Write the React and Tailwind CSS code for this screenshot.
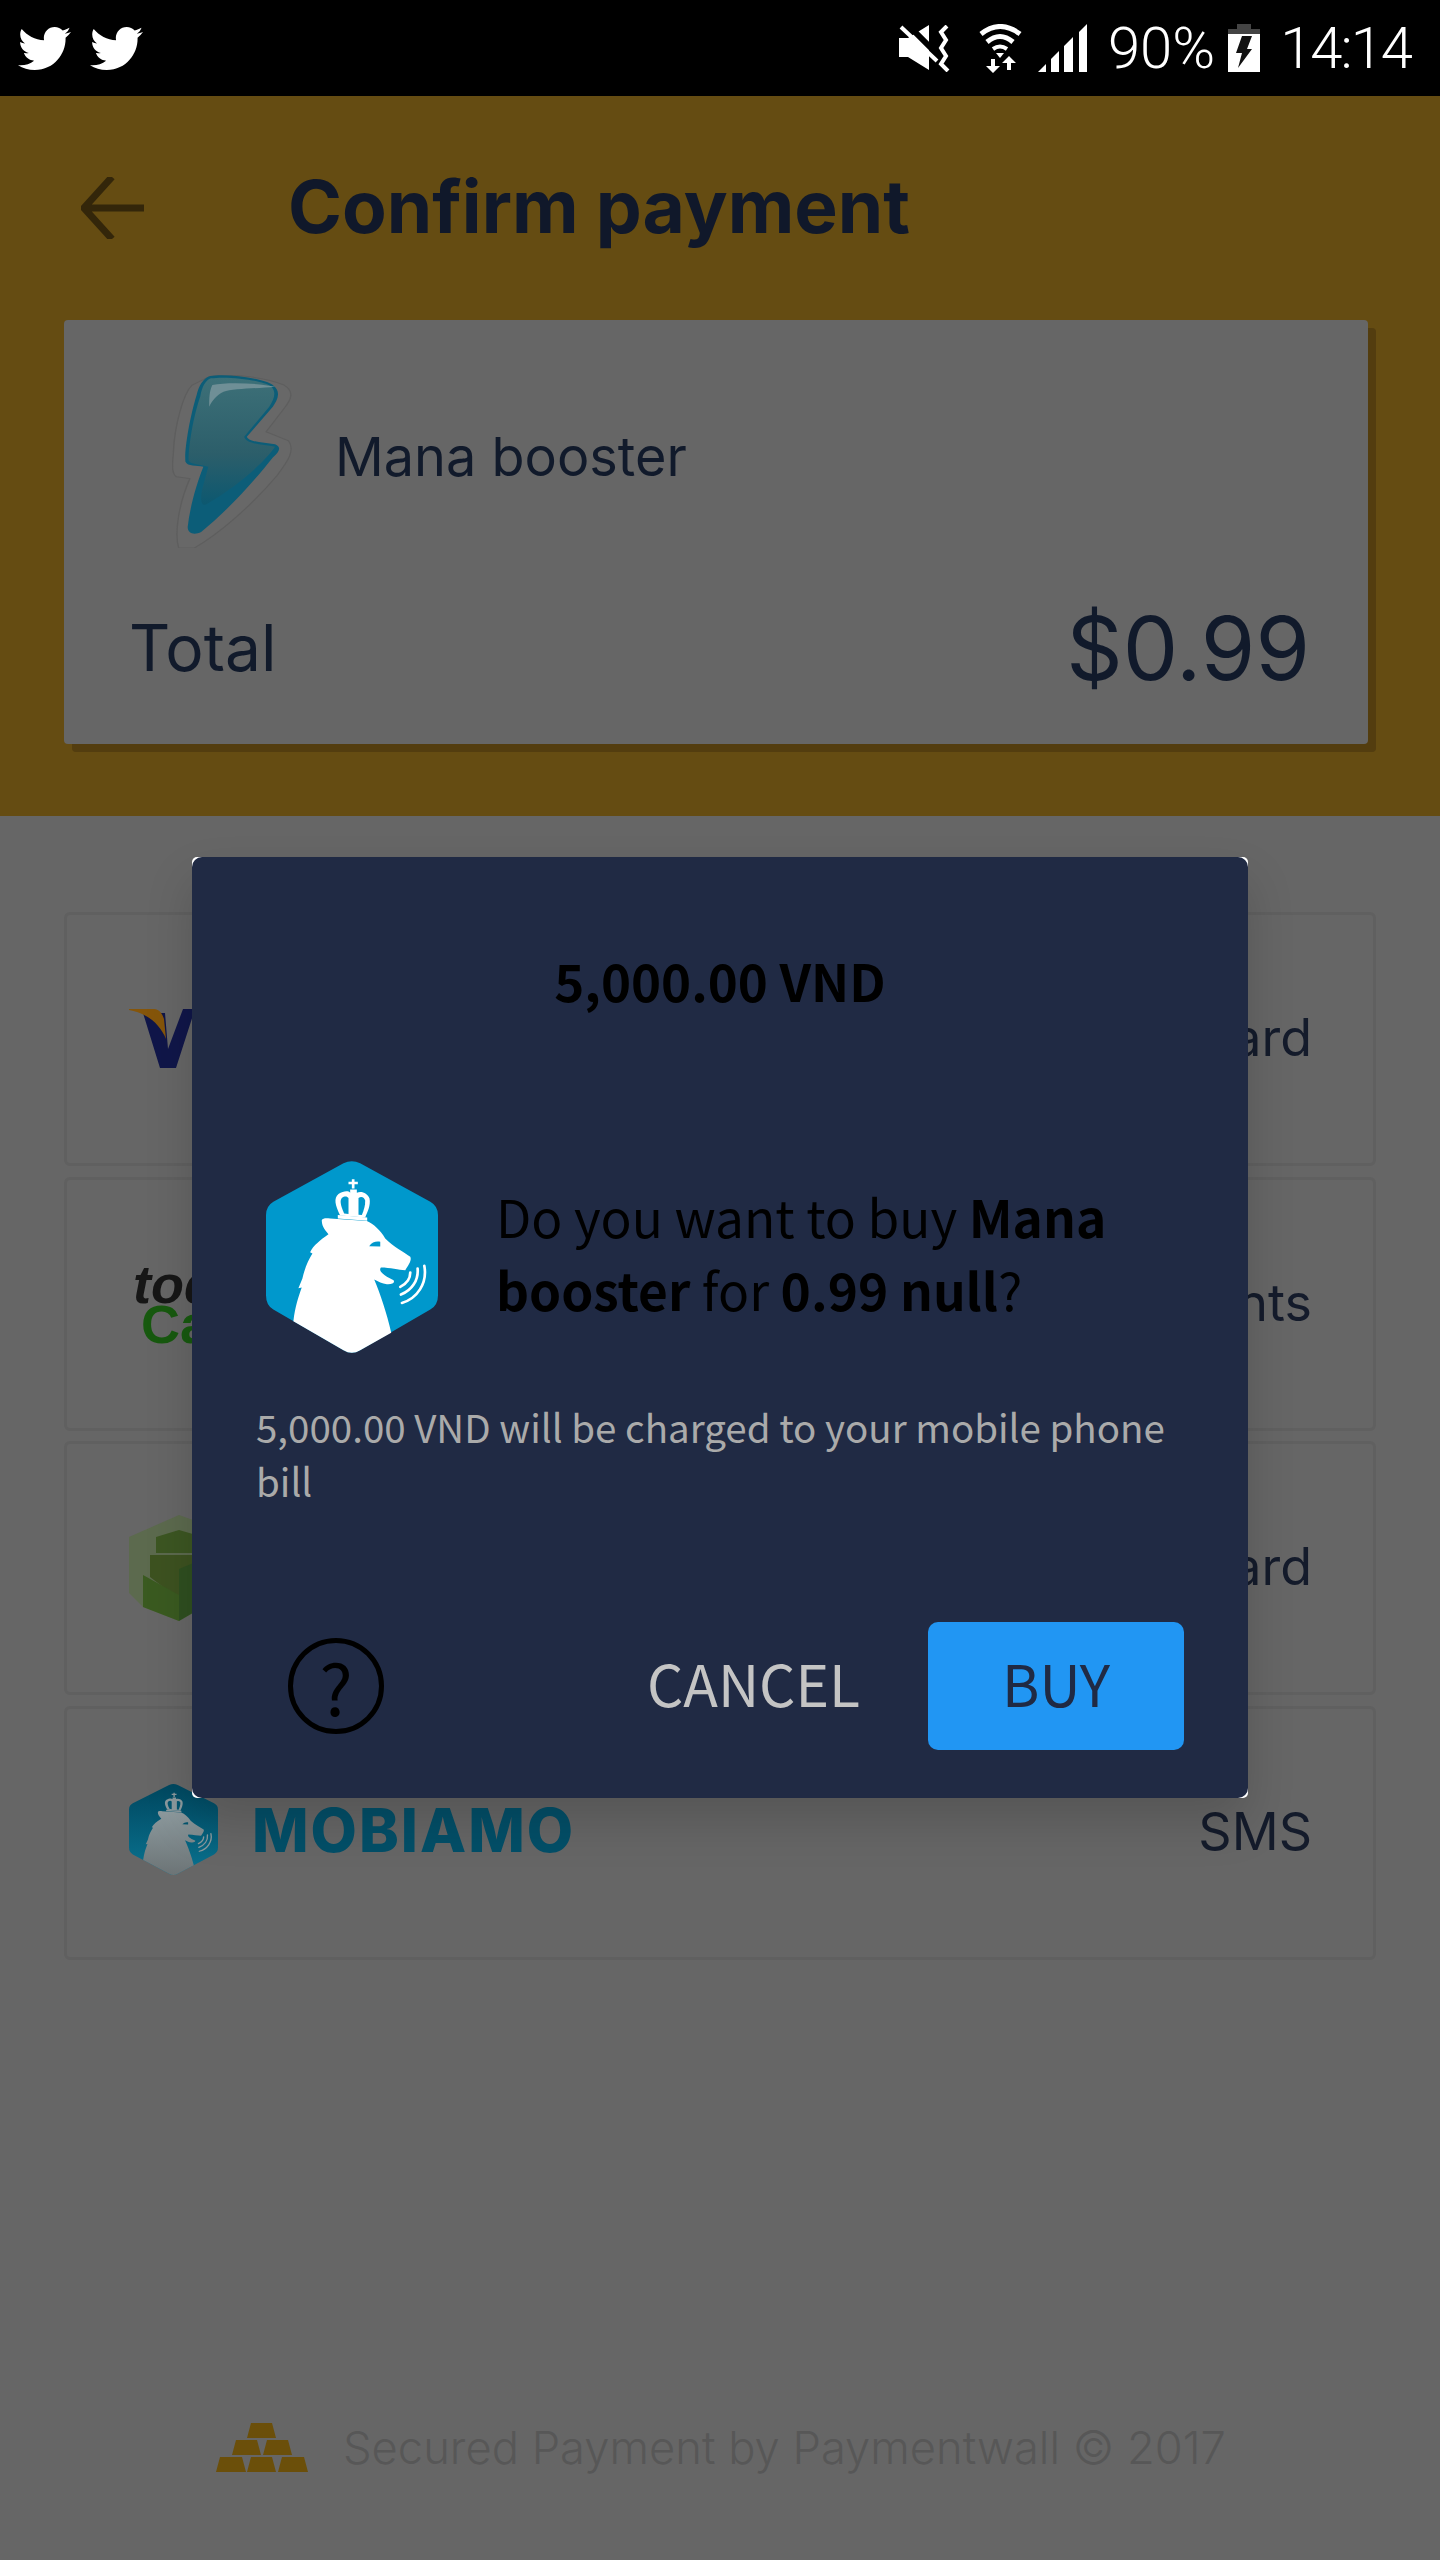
import React from "react";
import { FaTwitter } from "react-icons/fa";

function Bear({ hexFill = "#0098cc", bearFill = "#ffffff", eyeFill = "#0098cc", className = "", muted = false }) {
  const hex = muted ? "url(#hexFade)" : hexFill;
  const bear = muted ? "url(#bearFade)" : bearFill;
  return (
    <svg viewBox="108 93 515 575" className={className} preserveAspectRatio="none">
      {muted && (
        <defs>
          <linearGradient id="hexFade" x1="0" y1="0" x2="0" y2="1">
            <stop offset="0" stopColor="#00475f" />
            <stop offset="1" stopColor="#0a7391" />
          </linearGradient>
          <linearGradient id="bearFade" x1="0" y1="0" x2="0" y2="1">
            <stop offset="0" stopColor="#8d9a9e" />
            <stop offset="1" stopColor="#6c7476" />
          </linearGradient>
        </defs>
      )}
      <path fill={hex} d="M340 100 Q365 87 390 100 L600 215 Q623 228 623 255 L623 495 Q623 525 600 538 L390 660 Q365 675 340 660 L130 538 Q108 525 108 495 L108 255 Q108 228 130 215 Z" />
      <path fill={bear} d="M190 573 C195 530 205 500 215 472 L205 474 L217 445 C225 410 235 390 247 370 L240 366 C250 345 270 330 295 312 C280 295 275 285 275 270 C278 263 290 264 300 265 L410 273 C430 282 450 300 465 325 C490 350 520 365 540 380 C545 390 535 405 525 420 C505 420 480 412 452 412 C445 420 455 430 470 440 L490 450 C495 458 485 463 470 462 C455 460 445 455 432 448 C450 490 470 550 483 607 L390 660 Q365 675 340 660 Z" />
      <path fill={eyeFill} d="M417 348 C425 335 440 332 450 335 L450 349 Z" />
      <path fill={bearFill} d="M330 256 C315 225 310 205 325 192 C340 182 355 182 360 188 L360 178 L380 178 L380 188 C395 182 412 190 418 205 C422 225 412 245 405 262 Z" />
      <path fill={bearFill} d="M323 255 L411 262 L411 272 L323 265 Z" />
      <path fill={eyeFill} d="M342 250 C332 228 328 212 335 204 C344 197 351 199 355 204 L355 252 Z" />
      <path fill={eyeFill} d="M385 254 L385 204 C394 197 403 203 405 212 C406 225 400 242 395 255 Z" />
      <path fill={bearFill} d="M365 148 H373 V155 H383 V163 H373 V175 H365 V163 H355 V155 H365 Z" />
      <g fill="none" stroke={bearFill} strokeWidth="8" strokeLinecap="round">
        <path d="M510 470 C530 460 540 445 540 427" />
        <path d="M512 493 C545 480 565 450 562 415" />
        <path d="M515 518 C560 505 592 460 582 407" />
      </g>
    </svg>
  );
}

function MuteIcon() {
  return (
    <svg width="51" height="47" viewBox="0 0 51 47" className="block">
      <path fill="#fff" d="M0 13 H9 L30 0 V45 L9 32 H0 Z" />
      <path stroke="#000" strokeWidth="6" d="M6 -3 L44 35" />
      <path stroke="#fff" strokeWidth="4" d="M2 2 L38 36" />
      <path fill="none" stroke="#fff" strokeWidth="4" d="M48 1 L42 7 L47 15 L42 23 L47 31 L42 39 L49 46" />
    </svg>
  );
}

function WifiIcon() {
  return (
    <svg width="43" height="49" viewBox="0 0 43 49" className="block">
      <g fill="none" stroke="#fff" strokeWidth="5">
        <path d="M2 10 Q21 -5 41 10" />
        <path d="M8 18 Q21 7 34 18" />
      </g>
      <path fill="none" stroke="#fff" strokeWidth="4" d="M14 25 Q21 20 28 25" />
      <path fill="#fff" d="M17 29 H25 L21 34 Z" />
      <path fill="#fff" d="M12 35 H16 V42 H21 L14 49 L7 42 H12 Z" />
      <path fill="#fff" d="M30 32 L37 39 H32 V46 H28 V39 H23 Z" />
    </svg>
  );
}

function SignalIcon() {
  return (
    <svg width="49" height="48" viewBox="0 0 49 48" className="block">
      <path fill="#fff" d="M0 48 L8 40 V48 Z M13 48 V35 L21 27 V48 Z M26 48 V22 L35 13 V48 Z M41 48 V8 L49 0 V48 Z" />
    </svg>
  );
}

function BatteryIcon() {
  return (
    <svg width="32" height="48" viewBox="0 0 32 48" className="block">
      <rect x="9" y="0" width="14" height="6" fill="#444" />
      <rect x="0" y="5" width="32" height="5" fill="#444" />
      <rect x="0" y="10" width="32" height="38" fill="#fff" />
      <path fill="#111" d="M14 12 H24 L19 25 H24 L10 44 L14 29 H8 Z" />
    </svg>
  );
}

function Bolt() {
  return (
    <svg viewBox="295 165 270 518" width="121" height="173" preserveAspectRatio="none" className="block">
      <defs>
        <linearGradient id="boltFill" x1="0" y1="0" x2="0" y2="1">
          <stop offset="0" stopColor="#3d7078" />
          <stop offset="0.6" stopColor="#2c5e6a" />
          <stop offset="1" stopColor="#0c5870" />
        </linearGradient>
      </defs>
      <path fill="#686868" stroke="#5e5e5e" strokeWidth="3" d="M375 172 C420 155 510 175 545 195 C570 215 560 240 545 265 L505 335 L555 362 C570 390 555 420 530 465 C470 560 400 640 345 683 L310 683 C300 640 310 550 335 475 L305 470 C295 460 295 440 298 400 C300 320 320 220 340 195 Z" />
      <path fill="#0c5d78" d="M380 168 C420 160 500 175 520 195 C540 215 530 240 520 260 L462 350 C465 365 500 368 525 372 C540 380 535 395 520 412 C480 480 420 570 360 635 C345 645 330 640 330 620 C335 560 350 490 365 440 C350 435 330 440 325 425 C322 390 335 290 350 225 C355 195 365 175 380 168 Z" />
      <path fill="url(#boltFill)" d="M382 175 C420 168 495 180 515 198 C530 215 522 240 512 260 L456 350 C460 372 495 372 525 380 C505 420 450 490 372 552 C360 560 358 540 362 510 C366 490 372 460 376 440 C350 430 335 432 332 420 C332 380 342 290 358 230 C362 200 370 180 382 175 Z" />
      <path fill="#6f8f96" d="M385 195 C420 185 490 190 525 200 C490 205 430 205 410 215 C395 225 385 240 378 260 C378 235 378 215 385 195 Z" />
    </svg>
  );
}

function VisaMark() {
  return (
    <svg width="90" height="60" viewBox="0 0 90 60" className="block">
      <path fill="#101649" d="M14 4 H36 L39 40 L54 0 H66 L47 59 H31 Z" />
      <path fill="#85550a" d="M0 0 H25 C30 0 33 4 35 10 L37 30 C33 20 26 12 17 7 C12 4 6 2 0 1 Z" />
    </svg>
  );
}

function BoxMark() {
  return (
    <svg width="120" height="106" viewBox="0 0 120 106" className="block">
      <path fill="#5c6a4e" d="M50 0 L100 18 V78 L50 106 L14 92 L0 78 V22 Z" />
      <path fill="#3c5622" d="M27 22 L50 15 L74 22 V38 L27 38 Z" />
      <path fill="#3d5220" d="M21 40 L64 40 V80 L50 84 L21 62 Z" />
      <path fill="#3a5a20" d="M14 60 L50 80 V106 L14 92 Z" />
      <path fill="#2f4f20" d="M50 54 L74 44 V92 L50 106 Z" />
    </svg>
  );
}

function MethodRow({ children, label }) {
  return (
    <div className="flex h-[254px] items-center justify-between rounded-[6px] border-[3px] border-[#606060] pl-[62px] pr-[61px]">
      <div className="flex items-center">{children}</div>
      <span className="-mt-[2px] text-[52px] font-normal leading-none text-[#141b2b]">{label}</span>
    </div>
  );
}

export default function App() {
  return (
    <div className="relative h-[2560px] w-[1440px] overflow-hidden bg-[#666666] font-['Inter',sans-serif]">
      <div className="flex h-[96px] items-center justify-between bg-black pl-[18px] pr-[29px]">
        <div className="flex items-center gap-[19px] text-white">
          <FaTwitter size={53} />
          <FaTwitter size={53} />
        </div>
        <div className="flex items-center text-white">
          <MuteIcon />
          <div className="w-[29px]" />
          <WifiIcon />
          <div className="w-[16px]" />
          <SignalIcon />
          <span className="ml-[21px] font-['Roboto',sans-serif] text-[58px] font-light leading-none">90%</span>
          <div className="ml-[13px]"><BatteryIcon /></div>
          <span className="ml-[20px] font-['Roboto',sans-serif] text-[58px] font-light leading-none tracking-[-2px]">14:14</span>
        </div>
      </div>

      <header className="h-[720px] bg-[#654c12] px-[64px] pr-[72px]">
        <div className="flex h-[224px] items-center pl-[17px]">
          <svg width="63" height="62" viewBox="0 0 63 62" className="block">
            <path fill="none" stroke="#33260a" strokeWidth="7" d="M63 31 H3 M31 0 L3 31 L31 62" />
          </svg>
          <h1 className="-mt-[3px] ml-[144px] text-[73px] font-bold leading-none text-[#10182a]">Confirm payment</h1>
        </div>
        <section className="h-[424px] rounded-[4px] bg-[#666666] shadow-[8px_8px_0_#533d0f]">
          <div className="flex h-[228px] items-start pl-[108px] pt-[55px]">
            <Bolt />
            <span className="ml-[42px] mt-[55px] text-[54px] leading-none text-[#111a2b]">Mana booster</span>
          </div>
          <div className="flex items-center justify-between pl-[65px] pr-[58px] pt-[56px]">
            <span className="text-[64px] leading-none text-[#111a2b]">Total</span>
            <span className="text-[88px] leading-none text-[#111a2b]">$0.99</span>
          </div>
        </section>
      </header>

      <main className="flex flex-col gap-[10.5px] px-[64px] pt-[96px]">
        <MethodRow label="Credit Card">
          <VisaMark />
        </MethodRow>
        <MethodRow label="Local Payments">
          <div className="pl-[4px] font-['Liberation_Sans',sans-serif] font-bold italic leading-[40px]">
            <div className="text-[54px] text-[#161616]">todito</div>
            <div className="pl-[8px] text-[54px] not-italic text-[#17590f]">Cash</div>
          </div>
        </MethodRow>
        <MethodRow label="Prepaid Card">
          <BoxMark />
        </MethodRow>
        <MethodRow label="SMS">
          <div className="-mt-[6px] flex items-center">
            <Bear muted hexFill="#0a6280" bearFill="#8b999d" eyeFill="#03556f" className="h-[91px] w-[89px]" />
            <span className="ml-[34px] font-['Inter',sans-serif] text-[60px] font-extrabold leading-none tracking-[2px] text-[#034f68]">MOBIAMO</span>
          </div>
        </MethodRow>
      </main>

      <footer className="absolute left-[216px] top-[2423px] flex items-center">
        <svg width="92" height="49" viewBox="0 0 92 49" className="block" fill="#6b4f0a">
          <path d="M35 0 H56 L60 15 H31 Z M20 17 H41 L45 32 H16 Z M51 17 H72 L76 32 H47 Z M4 34 H26 L30 49 H0 Z M35 34 H56 L60 49 H31 Z M66 34 H88 L92 49 H62 Z" />
        </svg>
        <span className="ml-[35px] text-[45.3px] font-light leading-none text-[#575757]">Secured Payment by Paymentwall © 2017</span>
      </footer>

      <div className="absolute left-[192px] top-[857px] h-[941px] w-[1056px] rounded-[5px] bg-white shadow-[0_24px_48px_rgba(0,0,0,0.16)]">
        <div className="flex h-full flex-col rounded-[10px] bg-[#202a44] font-['Noto_Sans_CJK_SC',sans-serif]">
          <h2 className="pt-[85px] text-center text-[51px] font-bold leading-[76px] text-black">5,000.00 VND</h2>
          <div className="mt-[143px] flex items-center pl-[74px]">
            <Bear className="h-[192px] w-[172px] shrink-0" />
            <p className="ml-[58px] w-[640px] pb-[10px] text-[51.4px] leading-[73px] text-black">
              Do you want to buy <b>Mana booster</b> for <b>0.99 null</b>?
            </p>
          </div>
          <p className="ml-[64px] mt-[46px] w-[940px] text-[38.5px] leading-[54px] text-[#aaaaaa]">
            5,000.00 VND will be charged to your mobile phone bill
          </p>
          <div className="mt-[115px] flex items-center pl-[96px] pr-[64px]">
            <div className="flex h-[96px] w-[96px] items-center justify-center rounded-full border-[5px] border-black text-[70px] font-normal leading-none text-black">?</div>
            <span className="ml-auto pb-[8px] text-[57px] leading-none text-[#c4c4c4]">CANCEL</span>
            <div className="ml-[68px] flex h-[128px] w-[256px] items-center justify-center rounded-[10px] bg-[#2196f3] pb-[8px] text-[57px] leading-none text-[#202a44]">BUY</div>
          </div>
        </div>
      </div>
    </div>
  );
}
